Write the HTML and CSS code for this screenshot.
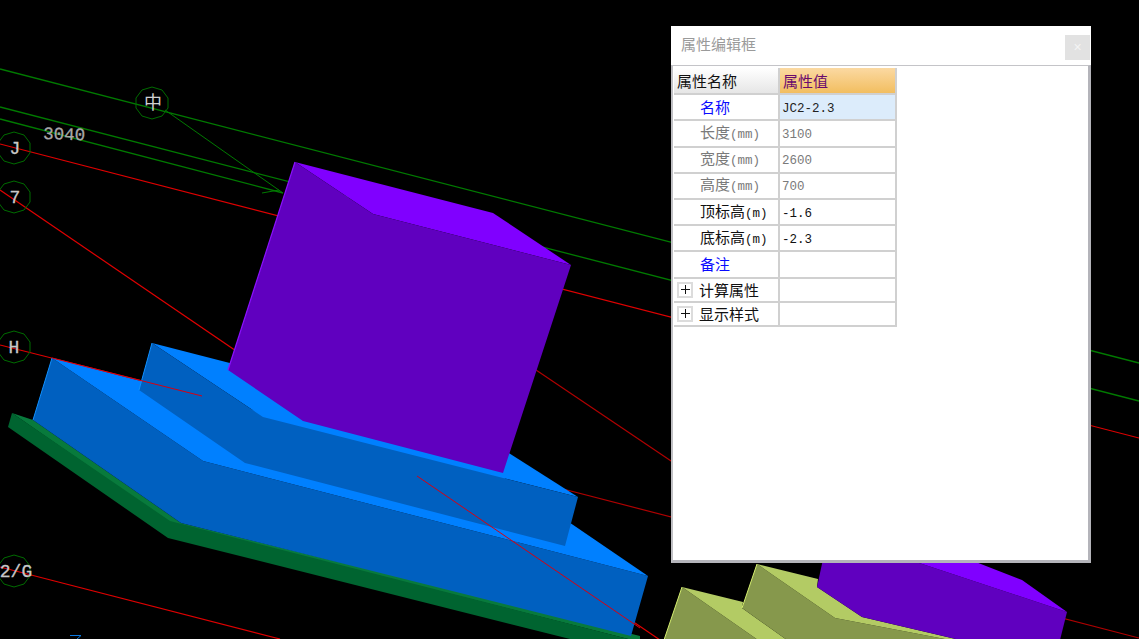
FILE: index.html
```html
<!DOCTYPE html>
<html lang="zh">
<head>
<meta charset="utf-8">
<title>属性编辑框</title>
<link rel="stylesheet" href="styles.css">
</head>
<body>
<main class="stage">
  <svg class="scene" width="1139" height="639" viewBox="0 0 1139 639">
    <g class="ln-green">
      <path d="M0 69L1139 363"/>
      <path d="M0 107L1139 401"/>
      <path d="M0 119L283 193"/>
      <path class="thin" d="M165 110L283 193M262 193L279 190"/>
    </g>
    <g class="ln-red">
      <path d="M0 144L1139 438"/>
      <path d="M0 190L660 640"/>
      <path d="M0 345L202 396"/>
      <path d="M0 567L280 639"/>
      <path class="deep" d="M536 370L680 467"/>
      <path class="deep" d="M563 489L1139 638"/>
    </g>
    <g class="axis">
      <polygon points="152,87 162,90 168,98 168,108 162,116 152,119 142,116 136,108 136,98 142,90"/>
      <polygon points="14,132 24,135 30,143 30,153 24,161 14,164 4,161 -2,153 -2,143 4,135"/>
      <polygon points="14,181 24,184 30,192 30,202 24,210 14,213 4,210 -2,202 -2,192 4,184"/>
      <polygon points="14,331 24,334 30,342 30,352 24,360 14,363 4,360 -2,352 -2,342 4,334"/>
      <polygon points="14,555 24,558 30,566 30,576 24,584 14,587 4,584 -2,576 -2,566 4,558"/>
    </g>
    <g class="labels">
      <text x="153" y="109" text-anchor="middle" class="lb-cjk">中</text>
      <text x="15" y="154" text-anchor="middle">J</text>
      <text x="15" y="203" text-anchor="middle">7</text>
      <text x="14" y="353" text-anchor="middle">H</text>
      <text x="16" y="577" text-anchor="middle">2/G</text>
      <text x="43" y="139" class="lb-dim" transform="rotate(2 43 139)">3040</text>
    </g>

    <polygon class="g-light" points="12,413 33,420 181,523 640,636 640,642 170,523"/>
    <polygon class="g-dark" points="12,413 170,521 640,642 574,640 168,538 8,427"/>
    <polygon class="b-dark" points="52,358 203,461 648,576 631,636 181,523 33,420"/>
    <polygon class="b-light" points="52,358 497,473 648,576 203,461"/>
    <path class="b-edge" d="M52 358L33 420"/>
    <polygon class="b-light" points="152,343 460,422 578,497 263,417"/>
    <polygon class="b-dark" points="152,343 263,417 578,497 565,546 245,463 139,390"/>
    <path class="b-edge" d="M152 343L139 390"/>
    <path class="ln-red-over" d="M52 358L202 396"/>
    <path class="ln-red-over" d="M417 476L640 628"/>

    <polygon class="p-light" points="295,162 493,213 571,265 373,214"/>
    <polygon class="p-dark" points="295,162 373,214 571,265 503,473 303,421 228,370"/>
    <path class="p-edge" d="M295 162L228 370"/>

    <polygon class="o-dark" points="682,587 758,640 664,640"/>
    <polygon class="o-light" points="682,587 743,602 742,608 787,640 758,640"/>
    <polygon class="o-dark" points="757,564 835,618 950,640 787,640 742,608"/>
    <polygon class="o-light" points="757,564 818,579 817,587 862,617 960,640 950,640 835,618"/>
    <path class="o-edge" d="M682 587L664 640M757 564L742 608"/>
    <polygon class="p-dark" points="825,550 817,587 862,617 960,640 1060,640 1067,612 880,550"/>
    <polygon class="p-light" points="880,550 945,550 1022,580 1067,612"/>

    <path class="tick" d="M70 635.500H81L76 640"/>
  </svg>

  <section class="dialog">
    <header class="dialog-head">
      <h1 class="dialog-title">属性编辑框</h1>
      <button class="dialog-close" type="button">×</button>
    </header>
    <div class="dialog-body">
      <table class="props">
        <thead>
          <tr>
            <th class="col-name">属性名称</th>
            <th class="col-value">属性值</th>
          </tr>
        </thead>
        <tbody>
          <tr class="is-key is-selected"><td>名称</td><td><span class="lat">JC2-2.3</span></td></tr>
          <tr class="is-muted"><td>长度<span class="lat">(mm)</span></td><td><span class="lat">3100</span></td></tr>
          <tr class="is-muted"><td>宽度<span class="lat">(mm)</span></td><td><span class="lat">2600</span></td></tr>
          <tr class="is-muted"><td>高度<span class="lat">(mm)</span></td><td><span class="lat">700</span></td></tr>
          <tr><td>顶标高<span class="lat">(m)</span></td><td><span class="lat">-1.6</span></td></tr>
          <tr><td>底标高<span class="lat">(m)</span></td><td><span class="lat">-2.3</span></td></tr>
          <tr class="is-key"><td>备注</td><td></td></tr>
          <tr class="is-group"><td><span class="plus"></span>计算属性</td><td></td></tr>
          <tr class="is-group"><td><span class="plus"></span>显示样式</td><td></td></tr>
        </tbody>
      </table>
    </div>
  </section>
</main>
</body>
</html>
```

FILE: styles.css
```css
* { box-sizing: border-box; }

html, body {
  margin: 0;
  height: 100%;
  background: #000;
  overflow: hidden;
}

.stage {
  position: relative;
  width: 1139px;
  height: 639px;
  background: #000;
  font-family: "Noto Sans CJK SC", "Liberation Sans", sans-serif;
}

.scene { display: block; }

.ln-green path { stroke: #007a00; stroke-width: 1.3; fill: none; }
.ln-green path.thin { stroke-width: 1; }
.ln-red path { stroke: #e00000; stroke-width: 1.2; fill: none; }
.ln-red path.deep { stroke: #b00000; }
.ln-red-over { stroke: #d80010; stroke-width: 1; fill: none; }

.axis polygon { fill: none; stroke: #006c00; stroke-width: 1; }

.labels text {
  font-family: "Liberation Mono", monospace;
  font-size: 18px;
  fill: #c8c8c8;
  stroke: #c8c8c8;
  stroke-width: 0.3;
}
.labels .lb-cjk { font-family: "Noto Sans CJK SC", sans-serif; font-size: 18px; fill: #d0d0d0; stroke: none; }
.labels .lb-dim { font-size: 17.500px; fill: #a8a8a8; stroke: #a8a8a8; }

.g-light { fill: #087a3c; }
.g-dark { fill: #006430; }
.b-light { fill: #0080ff; }
.b-dark { fill: #0060c0; }
.b-edge { stroke: #1090ff; stroke-width: 1; fill: none; }
.p-light { fill: #8000ff; }
.p-dark { fill: #6000bf; }
.p-edge { stroke: #8c10ff; stroke-width: 1.2; fill: none; }
.o-light { fill: #b3cb64; }
.o-dark { fill: #86984c; }
.o-edge { stroke: #d6f070; stroke-width: 1; fill: none; }
.tick { stroke: #0a78e0; stroke-width: 1; fill: none; }

.dialog {
  position: absolute;
  left: 671px;
  top: 26px;
  width: 420px;
  height: 537px;
  display: flex;
  flex-direction: column;
  background: #fff;
}

.dialog-head {
  height: 39px;
  display: flex;
  align-items: flex-start;
  justify-content: space-between;
  padding: 8px 1px 0 10px;
}

.dialog-title {
  margin: 0;
  font-size: 15px;
  font-weight: 400;
  line-height: 20px;
  color: #9a9a9a;
}

.dialog-close {
  width: 25px;
  height: 25px;
  margin-top: 1px;
  padding: 0;
  border: 0;
  background: #e2e2e2;
  color: #f4f4f4;
  font: 14px/25px "Liberation Sans", sans-serif;
}

.dialog-body {
  flex: 1;
  padding: 2px 0 0 1px;
  border-style: solid;
  border-color: #c4c4c8 #b4b4ba #b4b4ba #c0c0c4;
  border-width: 1px 3px 3px 2px;
  background: #fff;
}

.props {
  border-collapse: collapse;
  table-layout: fixed;
  width: 223px;
  font-size: 15px;
  color: #111;
}

.props th, .props td {
  height: 26.200px;
  padding: 0;
  border: 2px solid #d0d0d0;
  white-space: nowrap;
  line-height: 20px;
  text-align: left;
  font-weight: 400;
}
.props tr > :first-child { border-left: 0; padding-left: 26px; }

.props th.col-name {
  width: 105px;
  padding-left: 3px;
  border-top: 0;
  background: linear-gradient(#fff, #e6e6e6);
  color: #111;
}
.props th.col-value {
  padding-left: 3px;
  border-top: 0;
  background: linear-gradient(#fbd9a2, #f2be60);
  color: #6a0a6e;
}
.props td:last-child { padding-left: 2px; }

.lat {
  font-family: "Liberation Mono", monospace;
  font-size: 12.500px;
}

.is-key td:first-child { color: #0a0aff; }
.is-selected td:last-child { background: #dcecfb; color: #222; }
.is-muted td { color: #7a7a7a; }

.props .is-group td { height: 24px; line-height: 20px; }
.props .is-group td:first-child { padding-left: 3px; }

.plus {
  display: inline-block;
  vertical-align: -2px;
  width: 16px;
  height: 16px;
  margin-right: 6px;
  border: 2px solid #dcdcdc;
  background:
    linear-gradient(#111, #111) center / 9px 1px no-repeat,
    linear-gradient(#111, #111) center / 1px 9px no-repeat,
    #fff;
}
```
